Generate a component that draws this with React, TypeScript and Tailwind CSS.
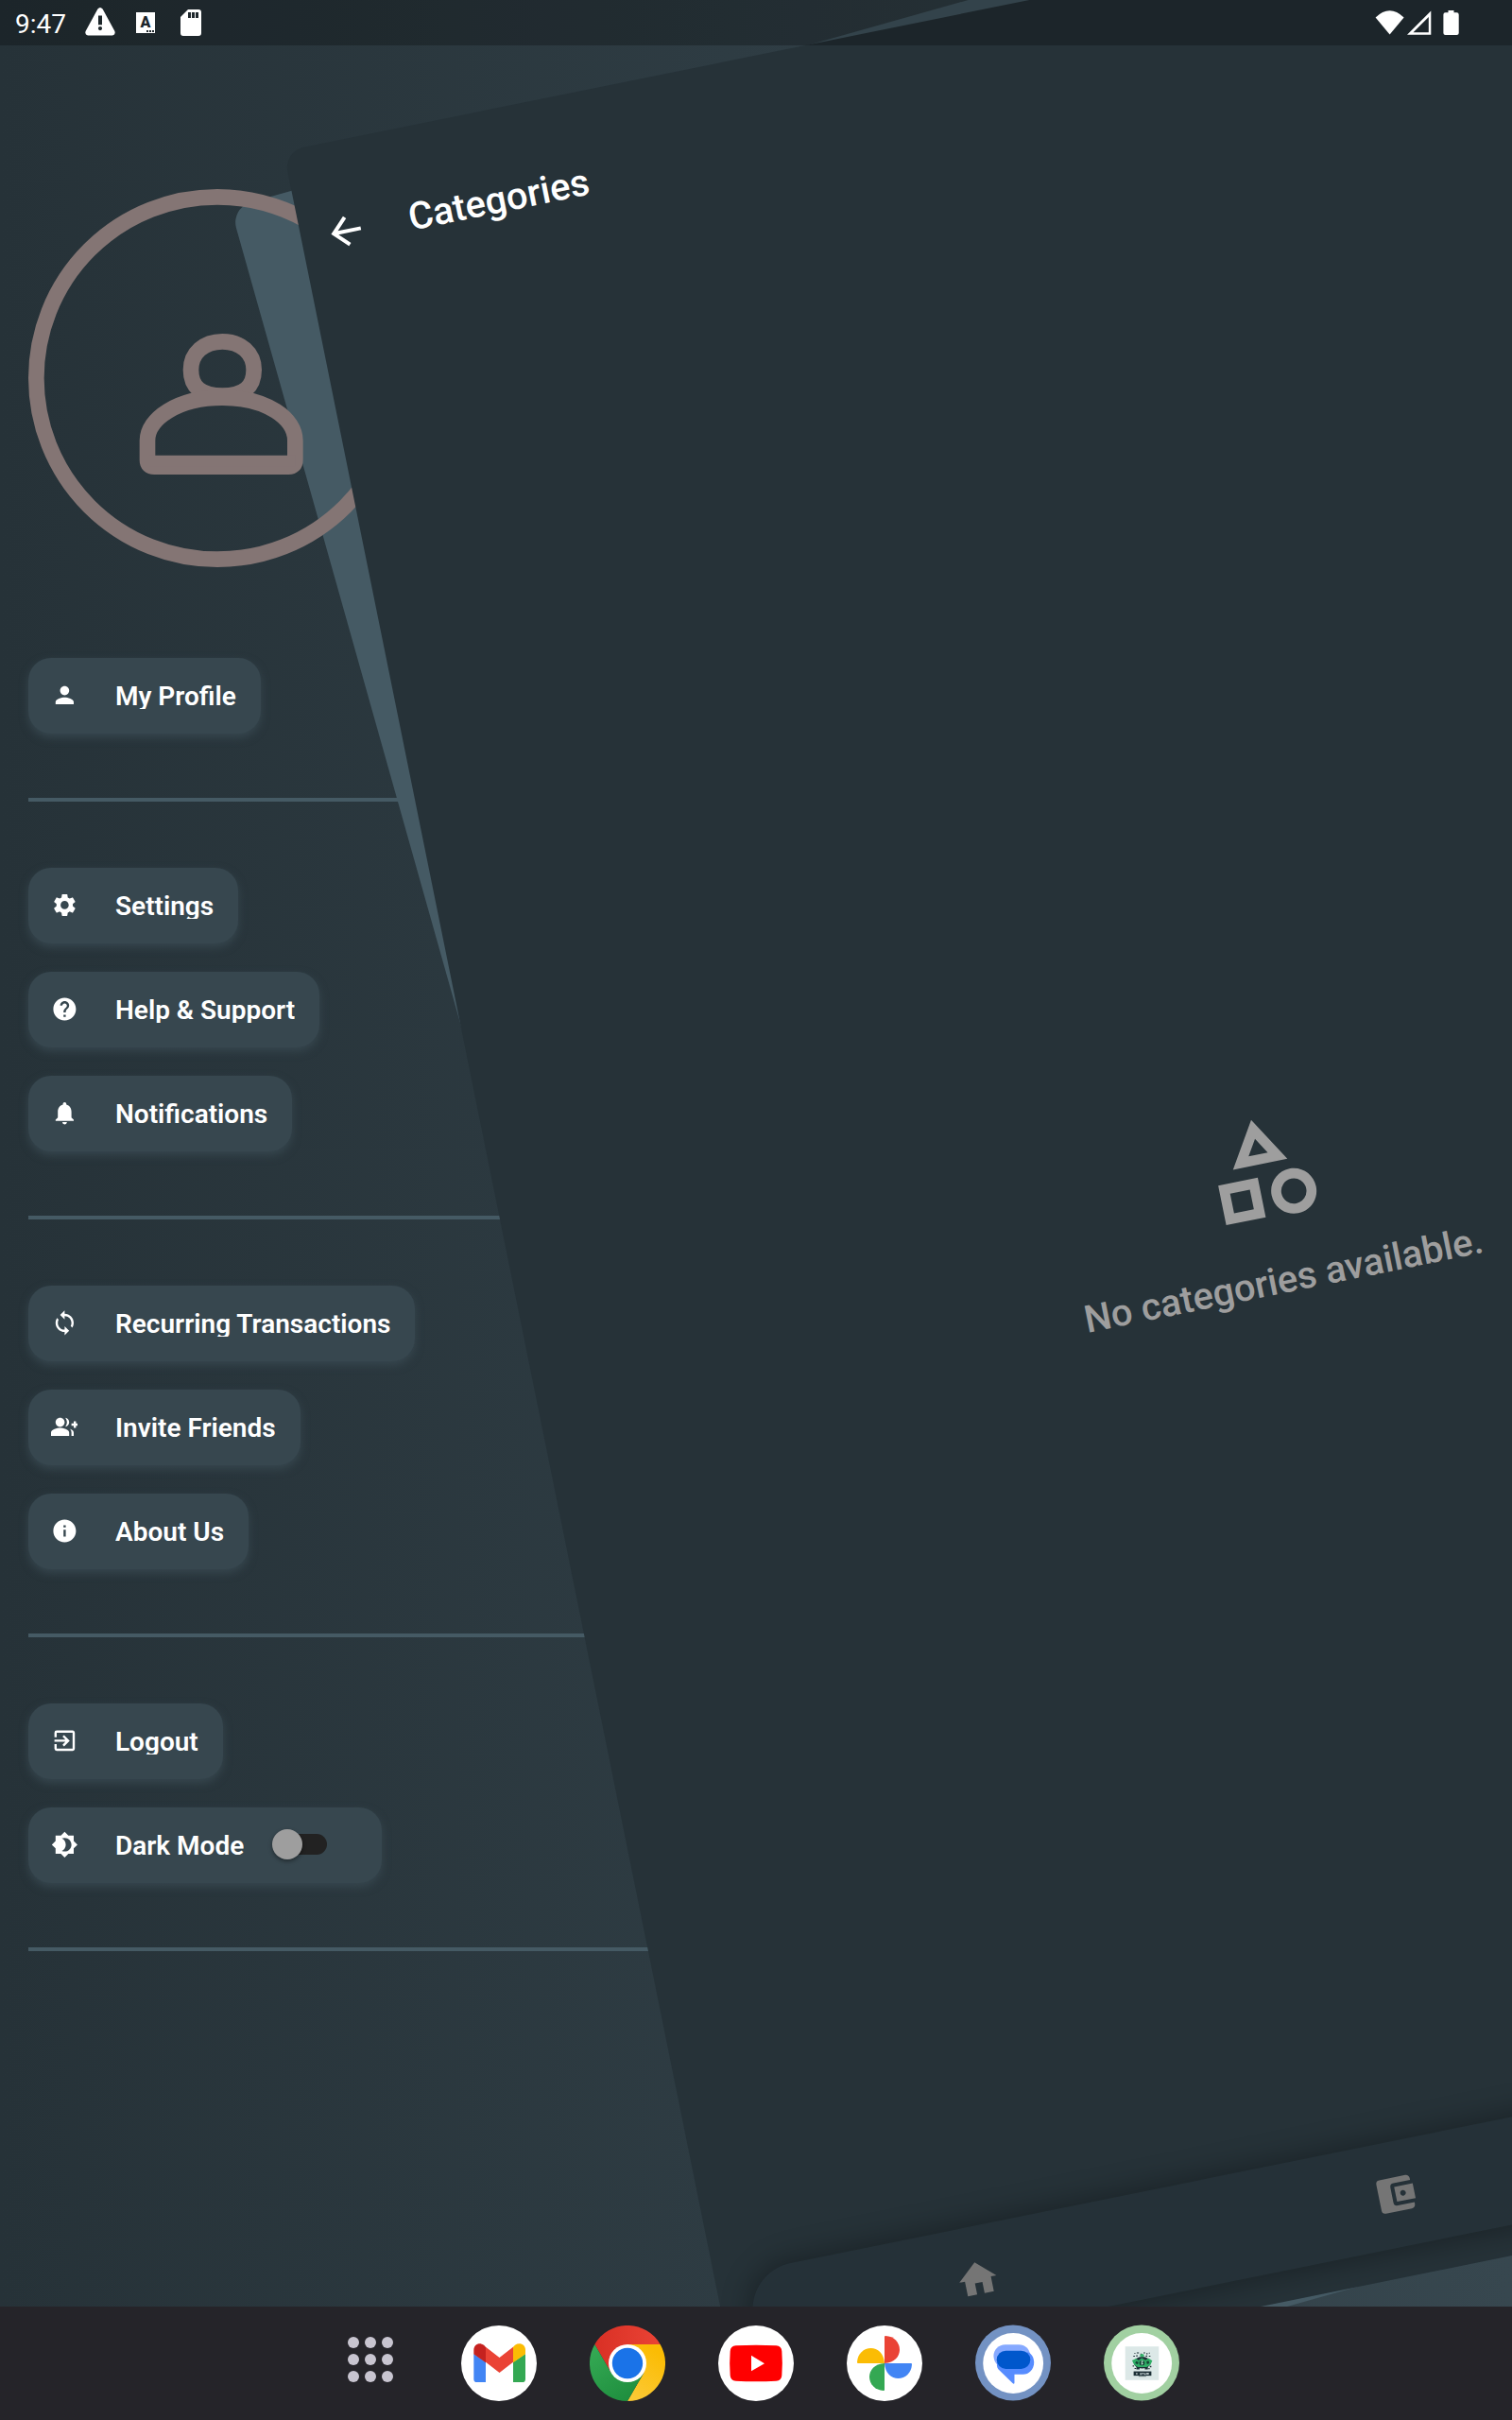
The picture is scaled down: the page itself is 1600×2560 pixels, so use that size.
import type { ReactNode } from "react";
import {
  MdAccountBalanceWallet,
  MdArrowBack,
  MdBrightness4,
  MdExitToApp,
  MdHelp,
  MdHome,
  MdInfo,
  MdNotifications,
  MdOutlineCategory,
  MdPerson,
  MdSettings,
  MdSync,
} from "react-icons/md";

function GroupAddIcon({ className }: { className?: string }) {
  return (
    <svg viewBox="0 0 24 24" fill="currentColor" className={className}>
      <path d="M22 9V7h-2v2h-2v2h2v2h2v-2h2V9zM8 12c2.21 0 4-1.79 4-4s-1.79-4-4-4-4 1.79-4 4 1.79 4 4 4zm0 1c-2.67 0-8 1.34-8 4v3h16v-3c0-2.66-5.33-4-8-4zm4.51-8.95C13.43 5.11 14 6.49 14 8s-.57 2.89-1.49 3.95C14.47 11.7 16 10.04 16 8s-1.53-3.7-3.49-3.95zm4.02 9.78C17.42 14.66 18 15.7 18 17v3h2v-3c0-1.45-1.59-2.51-3.47-3.17z" />
    </svg>
  );
}

function Avatar() {
  return (
    <svg
      viewBox="0 0 1200 1200"
      className="h-[400px] w-[400px] shrink-0"
      fill="none"
      stroke="#847574"
      strokeWidth="50"
    >
      <circle cx="600" cy="600" r="575" />
      <path d="M616 484C674 484 716 520 716 574C716 628 684 656 616 656C548 656 516 628 516 574C516 520 558 484 616 484Z" />
      <path d="M616 662C760 662 847 730 847 798V860Q847 881 826 881H400Q378 881 378 860V798C378 730 472 662 616 662Z" />
      <path d="M395 856H837V870H395Z" strokeWidth="22" />
    </svg>
  );
}

function MenuItem({ icon, label, children }: { icon: ReactNode; label: string; children?: ReactNode }) {
  return (
    <div className="flex h-20 items-start rounded-[24px] bg-[#37474f] pl-[23.5px] pr-[26px] shadow-[0_4px_10px_#37474f]">
      <span className="mt-[24.6px] text-[28.8px] text-white">{icon}</span>
      <span className="ml-[39.7px] mt-[27px] h-[27px] overflow-hidden whitespace-nowrap text-[28px] font-semibold leading-7 text-white">
        {label}
      </span>
      {children}
    </div>
  );
}

function Divider() {
  return <div className="mb-[70px] mt-[68px] h-1 w-full shrink-0 bg-[#455a64]" />;
}

function Toggle() {
  return (
    <span className="relative ml-[29.5px] mr-8 mt-[23px] flex h-8 w-[58px] items-center">
      <span className="ml-[5px] h-[22px] w-[53px] rounded-full bg-[#222222]" />
      <span className="absolute left-0 top-0 h-8 w-8 rounded-full bg-[#9e9e9e] shadow-[0_2px_4px_rgba(0,0,0,0.4)]" />
    </span>
  );
}

function Drawer() {
  return (
    <div className="absolute inset-0 flex flex-col px-[30px] pt-[200px]">
      <Avatar />
      <div className="mt-24 flex flex-col items-start gap-[30px]">
        <MenuItem icon={<MdPerson />} label="My Profile" />
      </div>
      <Divider />
      <div className="flex flex-col items-start gap-[30px]">
        <MenuItem icon={<MdSettings />} label="Settings" />
        <MenuItem icon={<MdHelp />} label="Help & Support" />
        <MenuItem icon={<MdNotifications />} label="Notifications" />
      </div>
      <Divider />
      <div className="flex flex-col items-start gap-[30px]">
        <MenuItem icon={<MdSync />} label="Recurring Transactions" />
        <MenuItem icon={<GroupAddIcon className="h-[28.8px] w-[28.8px]" />} label="Invite Friends" />
        <MenuItem icon={<MdInfo />} label="About Us" />
      </div>
      <Divider />
      <div className="flex flex-col items-start gap-[30px]">
        <MenuItem icon={<MdExitToApp />} label="Logout" />
        <MenuItem icon={<MdBrightness4 />} label="Dark Mode">
          <Toggle />
        </MenuItem>
      </div>
      <Divider />
    </div>
  );
}

function CategoriesScreen() {
  return (
    <div className="absolute left-[300px] top-[160px] flex h-[2440px] w-[1600px] origin-top-left rotate-[-0.2rad] flex-col overflow-hidden rounded-[22px] bg-[#263238]">
      <header className="mb-4 mt-12 flex h-24 shrink-0 items-center pl-6 text-white">
        <MdArrowBack className="text-[48px]" />
        <h1 className="ml-11 text-[40px] font-medium leading-none">Categories</h1>
      </header>
      <main className="flex flex-1 flex-col items-center justify-center pt-[2px] text-[#9e9e9e]">
        <MdOutlineCategory className="text-[128px]" />
        <p className="mt-8 text-[40px] font-medium leading-[48px]">No categories available.</p>
      </main>
      <nav className="absolute inset-x-8 bottom-8 flex h-28 items-center gap-[403px] rounded-[50px] bg-[#253138] pl-[217px] text-[48px] text-[#757575] shadow-[0_0_30px_4px_rgba(0,0,0,0.3)]">
        <MdHome />
        <MdAccountBalanceWallet />
      </nav>
    </div>
  );
}

function StatusBar() {
  return (
    <div className="absolute inset-x-0 top-0 flex h-12 items-start bg-black/25 text-white">
      <span className="ml-4 mt-[10px] w-[54px] text-[28px] leading-8">9:47</span>
      <svg viewBox="0 0 32 30" className="ml-5 mt-2 h-[30px] w-8">
        <path
          fillRule="evenodd"
          fill="#fff"
          d="M13.4 1.6Q16-1.4 18.6 1.6L31.4 25Q32.6 29 29 29.4H3Q-.6 29 .6 25ZM14 8.500V18.200H18V8.500ZM16 20A2.100 2.100 0 1 0 16 24.200A2.100 2.100 0 1 0 16 20Z"
        />
      </svg>
      <span className="relative ml-[22px] mt-[13px] flex h-[22px] w-5 items-center justify-center bg-white text-[16px] font-black leading-none text-[#1d262b]">
        <span className="-mt-px">A</span>
        <span className="absolute bottom-px right-px flex gap-px">
          <i className="h-0.5 w-0.5 bg-[#1d262b]" />
          <i className="h-0.5 w-0.5 bg-[#1d262b]" />
          <i className="h-0.5 w-0.5 bg-[#1d262b]" />
        </span>
      </span>
      <svg viewBox="0 0 22 28" className="ml-[27px] mt-[10px] h-7 w-[22px]">
        <path
          fillRule="evenodd"
          fill="#fff"
          d="M8 0H19Q22 0 22 3V25Q22 28 19 28H3Q0 28 0 25V8ZM8 3V9H11V3ZM12 3V9H15V3ZM16 3V9H19V3Z"
        />
      </svg>
      <svg viewBox="0 0 90 28" className="ml-auto mr-[55px] mt-[10px] h-7 w-[90px]" fill="#fff">
        <path d="M.6 8.500Q15.500-6 30.600 8.500L15.600 26.500Z" />
        <path fillRule="evenodd" d="M59.300 1.500V26.800H34ZM56.800 8V24.300H40.500Z" />
        <path d="M77.500 1H83.500V3.200H86.500Q88.700 3.200 88.700 5.400V25Q88.700 27 86.500 27H74.500Q72.400 27 72.400 25V5.400Q72.400 3.200 74.500 3.200H77.500Z" />
      </svg>
    </div>
  );
}

function Gmail() {
  return (
    <svg viewBox="0 0 240 240" className="h-20 w-20">
      <circle cx="120" cy="120" r="120" fill="#fff" />
      <path d="M40 90L78 116V180H50Q40 180 40 170Z" fill="#4285f4" />
      <path d="M204 90L165 116V180H194Q204 180 204 170Z" fill="#34a853" />
      <path d="M78 68L121.500 102L165 68V116L121.500 150L78 116Z" fill="#ea4335" />
      <path d="M40 91V78C40 60 58 52 72 62L78 68V118Z" fill="#c5221f" />
      <path d="M204 91V78C204 60 186 52 171 62L165 68V118Z" fill="#fbbc04" />
    </svg>
  );
}

function Chrome() {
  return (
    <svg viewBox="0 0 240 240" className="h-20 w-20">
      <defs>
        <linearGradient id="chromeRed">
          <stop stopColor="#d93025" />
          <stop offset="1" stopColor="#ea4335" />
        </linearGradient>
        <linearGradient id="chromeGreen" x1="0.7" y1="1" x2="0.1" y2="0.1">
          <stop stopColor="#1e8e3e" />
          <stop offset="1" stopColor="#34a853" />
        </linearGradient>
        <linearGradient id="chromeYellow" x1="0.3" y1="1" x2="0.7" y2="0.1">
          <stop stopColor="#fcc934" />
          <stop offset="1" stopColor="#fbbc04" />
        </linearGradient>
      </defs>
      <path d="M16 60A120 120 0 0 1 224 60H120L68 150Z" fill="url(#chromeRed)" />
      <path d="M224 60A120 120 0 0 1 120 240L172 150L120 60Z" fill="url(#chromeYellow)" />
      <path d="M16 60A120 120 0 0 0 120 240L172 150H68Z" fill="url(#chromeGreen)" />
      <circle cx="120" cy="120" r="60" fill="#fff" />
      <circle cx="120" cy="120" r="48.500" fill="#1a73e8" />
    </svg>
  );
}

function YouTube() {
  return (
    <svg viewBox="0 0 240 240" className="h-20 w-20">
      <circle cx="120" cy="120" r="120" fill="#fff" />
      <path
        d="M56 64Q120 60 184 64Q201 65 202 82Q205 120 202 158Q201 175 184 176Q120 180 56 176Q39 175 38 158Q35 120 38 82Q39 65 56 64Z"
        fill="#f00"
      />
      <path d="M105 95.500L147 120.500L105 145Z" fill="#fff" />
    </svg>
  );
}

function Photos() {
  return (
    <svg viewBox="0 0 240 240" className="h-20 w-20">
      <circle cx="120" cy="120" r="120" fill="#fff" />
      <path d="M120 36Q120 33 123 33C150 34 168 54 168 77C168 98 152 118 120 120Z" fill="#ea4335" />
      <path d="M204 120Q207 120 207 123C206 150 186 168 163 168C142 168 122 152 120 120Z" fill="#4285f4" />
      <path d="M120 204Q120 207 117 207C90 206 72 186 72 163C72 142 88 122 120 120Z" fill="#34a853" />
      <path d="M36 120Q33 120 33 117C34 90 54 72 77 72C98 72 118 88 120 120Z" fill="#fbbc04" />
    </svg>
  );
}

function Messages() {
  return (
    <svg viewBox="0 0 243 243" className="-mt-px h-[81px] w-20">
      <circle cx="121.500" cy="121.500" r="121.500" fill="#7392c3" />
      <circle cx="122" cy="123" r="97" fill="#fff" />
      <path d="M96 63H140C160 63 174 76 177 96L80 134C68 130 59 114 59 99C59 80 76 63 96 63Z" fill="#86a9ff" />
      <path d="M168 87C180 90 189 104 189 120C189 143 172 159 154 159H126V186Q125 191 120 187L74 142C69 136 68 126 72 116Z" fill="#578cff" />
      <rect x="69" y="83" width="108" height="58" rx="29" fill="#0057cc" />
    </svg>
  );
}

function PiggyApp() {
  return (
    <svg viewBox="0 0 243 243" className="-mt-px h-[81px] w-20">
      <circle cx="121.500" cy="121.500" r="121.500" fill="#a1d0a1" />
      <circle cx="122" cy="123" r="97" fill="#fff" />
      <rect x="69" y="69" width="108" height="108" fill="#dce8e7" />
      <g fill="#1d3036">
        <path d="M98 90h4v3h-4zM106 88h7v3h-7zM118 92h4v4h-4zM128 88h5v3h-5zM137 90h4v4h-4zM145 89h3v3h-3zM95 99h5v3h-5zM104 97h5v4h-5zM135 98h5v4h-5zM145 99h5v3h-5zM93 130h4v4h-4zM99 138h5v3h-5zM148 131h5v5h-5zM143 139h5v3h-5z" />
        <ellipse cx="123.500" cy="121" rx="27" ry="19" />
        <path d="M105 132h10v11h-10zM132 132h10v11h-10z" />
        <rect x="96" y="149" width="57" height="14" />
        <rect x="112" y="163" width="24" height="3" opacity="0.6" />
      </g>
      <path d="M91 114L104 108L112 114L122 106L134 113L144 107L156 115L150 128L138 135H110L98 128Z" fill="#2fae66" />
      <ellipse cx="123" cy="98" rx="7" ry="5" fill="#37b36c" />
      <path d="M104 116l8 3-3 8-8-4zM137 117l7-2 3 8-8 3z" fill="#174436" />
      <ellipse cx="123" cy="122" rx="9" ry="8" fill="#164a3a" />
      <path d="M121 115h5v4h-4l5 6-6 3z" fill="#c9eed8" />
      <path d="M104 154h4v5h-4zM117 154h4v6h-4zM123 154h6v4h-6zM131 155h4v5h-4zM137 154h8v5h-8z" fill="#dfe9ea" />
    </svg>
  );
}

function Dock() {
  return (
    <div className="absolute inset-x-0 bottom-0 flex h-[120px] items-start bg-[#252429] pl-[368px] pt-5">
      <div className="mt-3 grid grid-cols-3 gap-[5.800px]">
        {Array.from({ length: 9 }, (_, i) => (
          <i key={i} className="h-3 w-3 rounded-full bg-[#c8c5d0]" />
        ))}
      </div>
      <div className="ml-[72.400px] flex gap-14">
        <Gmail />
        <Chrome />
        <YouTube />
        <Photos />
        <Messages />
        <PiggyApp />
      </div>
    </div>
  );
}

export default function App() {
  return (
    <div className="relative h-[2560px] w-[1600px] overflow-hidden bg-linear-to-r from-[#263238] to-[#37474f] font-['Roboto',sans-serif]">
      <div className="absolute left-[244px] top-[220px] h-[2440px] w-[1600px] origin-top-left rotate-[-0.2747rad] rounded-[22px] bg-[#455a64]" />
      <Drawer />
      <CategoriesScreen />
      <StatusBar />
      <Dock />
    </div>
  );
}
